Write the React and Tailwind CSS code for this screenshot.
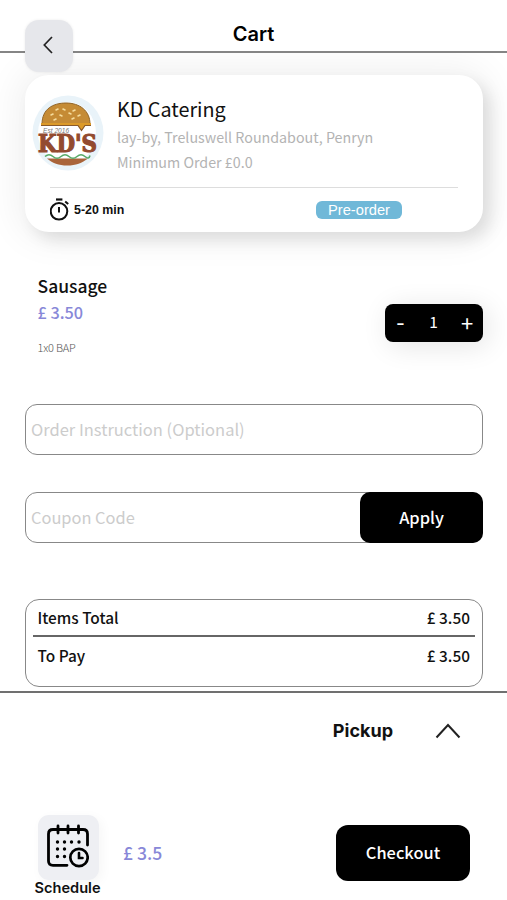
import React from "react";

const totals = [
  { label: "Items Total", value: "£ 3.50" },
  { label: "To Pay", value: "£ 3.50" },
];

function BurgerLogo() {
  return (
    <svg width="72" height="76" viewBox="0 0 72 76">
      <ellipse cx="36" cy="38" rx="35.5" ry="37.5" fill="#e9f3f9" />
      <ellipse cx="35" cy="38" rx="29" ry="31" fill="#fff" />
      <path
        d="M10 29 C10 14 21 8 34 8 C48 8 58 16 58 29 Z"
        fill="#c58b35"
        stroke="#8f6428"
        strokeWidth="1"
      />
      <path d="M9 28 H59 V31 H53 L49.5 36 L46 31 H9 Z" fill="#dc9a28" />
      <path d="M9 30.5 H46 L49.5 35.5 L53 30.5 H59" fill="none" stroke="#8a5a2b" strokeWidth="1.2" />
      <g stroke="#f5dc9c" strokeWidth="1.6" strokeLinecap="round">
        <path d="M24 15l2-1M31 14l2 1M41 16l2-1M19 20l2-1M28 20l2 1M37 18l2 1M46 21l2-1M22 25l2-1M40 24l2-1" />
      </g>
      <text
        x="11"
        y="37.5"
        fontSize="6.5"
        fontStyle="italic"
        fontFamily="Liberation Sans, sans-serif"
        fill="#777"
        textLength="26"
      >
        Est 2016
      </text>
      <path d="M15 63.500 H56 C50 68 44 70.500 35 70.500 C27 70.500 20 68 15 63.500 Z" fill="#a9643a" />
      <path
        d="M13 61.500 q4 -3.500 8 0 t8 0 t8 0 t8 0 t8 0 t5 -1"
        fill="none"
        stroke="#58aa68"
        strokeWidth="1.6"
      />
      <text
        x="6"
        y="57.3"
        fontSize="23.5"
        fontWeight="700"
        fontFamily="DejaVu Serif, serif"
        fill="#934b30"
        stroke="#934b30"
        strokeWidth="1.2"
        textLength="59"
        lengthAdjust="spacingAndGlyphs"
      >
        KD'S
      </text>
    </svg>
  );
}

function StopwatchIcon() {
  return (
    <svg width="21" height="24" viewBox="0 0 21 24" fill="none" stroke="#111">
      <circle cx="9" cy="13.300" r="8.300" strokeWidth="2" />
      <path d="M6 1.500H12.400" strokeWidth="2.2" />
      <path d="M9 9V14.500" strokeWidth="2" />
      <path d="M15.200 3.500L18.200 6.100" strokeWidth="2" />
    </svg>
  );
}

function ScheduleIcon() {
  return (
    <svg width="42" height="44" viewBox="0 0 42 44" fill="none" stroke="#000" strokeLinecap="round">
      <path
        d="M20 41.300H6Q1.500 41.300 1.500 37V10Q1.500 5.500 6 5.500H36Q40.500 5.500 40.500 10V21"
        strokeWidth="2.8"
      />
      <path d="M11 2V9M21 2V9M31.500 2V9" strokeWidth="2.800" />
      <path
        d="M10.500 18h.01M17.500 18h.01M24.500 18h.01M32 18h.01M10.500 25h.01M17.500 25h.01M10.500 32.500h.01M17.500 32.500h.01"
        strokeWidth="3.4"
      />
      <circle cx="32" cy="33.500" r="8.700" strokeWidth="2.700" />
      <path d="M32 29V34H35.500" strokeWidth="2.600" />
    </svg>
  );
}

function Header() {
  return (
    <header className="relative flex h-[53px] shrink-0 items-start justify-center border-b-2 border-[#858585] bg-white pt-[19px]">
      <button className="absolute top-5 left-[25px] z-10 flex h-[52px] w-12 items-center justify-center rounded-[14px] bg-[#e6e7eb] pr-[2px] pb-[3px] shadow-[0_0_3px_rgba(0,0,0,0.08)]">
        <svg width="10" height="18" viewBox="0 0 10 18" fill="none" stroke="#222" strokeWidth="1.7">
          <path d="M9 1L1.300 9L9 17" />
        </svg>
      </button>
      <h1 className="font-['Inter',sans-serif] text-[20px] leading-[30px] font-semibold text-black">
        Cart
      </h1>
    </header>
  );
}

function RestaurantCard() {
  return (
    <section className="h-[157px] rounded-[24px] bg-white shadow-[8px_8px_16px_rgba(0,0,0,0.10),0_0_36px_8px_rgba(0,0,0,0.06)]">
      <div className="flex h-[112px] pt-[20px] pl-[7px]">
        <BurgerLogo />
        <div className="-mt-px pl-[13px]">
          <h2 className="text-[19.8px] leading-[30px] text-[#111]">KD Catering</h2>
          <p className="text-[14.27px] leading-[25px] text-[#b3b3b3]">
            lay-by, Treluswell Roundabout, Penryn
          </p>
          <p className="text-[14.27px] leading-[25px] text-[#b3b3b3]">Minimum Order £0.0</p>
        </div>
      </div>
      <div className="mx-[25px] flex h-[45px] items-center border-t border-[#ddd]">
        <StopwatchIcon />
        <span className="ml-[3px] font-['Liberation_Sans',sans-serif] text-[12.4px] font-bold text-[#111]">
          5-20 min
        </span>
        <span className="mr-[56px] ml-auto flex h-[18px] w-[86px] items-center justify-center rounded-[6px] bg-[#70b8d8] font-['Liberation_Sans',sans-serif] text-[14.7px] text-white">
          Pre-order
        </span>
      </div>
    </section>
  );
}

function CartItem() {
  return (
    <section className="mt-[42px] flex h-[86px] justify-between pl-[12.5px]">
      <div>
        <h3 className="text-[17.5px] leading-[24px] font-medium text-[#111]">Sausage</h3>
        <p className="text-[16.3px] leading-[28px] font-medium text-[#8888d8]">£ 3.50</p>
        <p className="mt-[13px] text-[11px] leading-4 font-light tracking-[-0.2px] text-[#555]">1x0 BAP</p>
      </div>
      <div className="mt-[30px] flex h-[38px] w-[98px] items-center rounded-[8px] bg-black text-white shadow-[4px_4px_28px_rgba(0,0,0,0.11)]">
        <button className="w-[31px] pb-[4px] text-[24px] leading-[30px]">-</button>
        <span className="flex-1 pb-[3px] text-center text-[15.5px]">1</span>
        <button className="w-[32px] pb-[3px] text-[22px] leading-[30px]">+</button>
      </div>
    </section>
  );
}

function App() {
  return (
    <div className="flex h-[900px] w-[507px] flex-col overflow-hidden bg-white font-['Noto_Sans_CJK_SC',sans-serif]">
      <Header />

      <main className="flex h-[638px] shrink-0 flex-col overflow-hidden pt-[22px] pr-[24px] pl-[25px]">
        <RestaurantCard />
        <CartItem />

        <div className="mt-[44px] flex h-[51px] items-center rounded-[12px] border border-[#888] px-[5px] pb-px text-[16.5px] text-[#ccc]">
          Order Instruction (Optional)
        </div>

        <div className="mt-[37px] flex h-[51px] items-stretch rounded-[12px] border border-[#888]">
          <span className="flex flex-1 items-center px-[5px] pb-px text-[16.4px] text-[#ccc]">Coupon Code</span>
          <button className="-my-px -mr-px w-[123px] rounded-[10px] bg-black pb-px text-[16.4px] font-medium text-white">
            Apply
          </button>
        </div>

        <section className="mt-[56px] h-[88px] rounded-[14px] border border-[#888] px-[7px] text-[15.4px] font-medium text-[#111]">
          {totals.map((row) => (
            <div
              key={row.label}
              className="flex h-[37px] items-center justify-between pt-px pr-[5px] pl-[4.5px] first:border-b-2 first:border-[#666]"
            >
              <span>{row.label}</span>
              <span>{row.value}</span>
            </div>
          ))}
        </section>
      </main>

      <footer className="flex-1 border-t-2 border-[#707070] px-[34px]">
        <div className="flex h-[75px] items-center justify-end gap-[42px] pr-[12px]">
          <span className="font-['Inter',sans-serif] text-[18px] font-bold text-[#111]">Pickup</span>
          <svg width="26" height="16" viewBox="0 0 26 16" fill="none" stroke="#222" strokeWidth="2">
            <path d="M1.500 14.500L13 2L24.500 14.500" />
          </svg>
        </div>
        <div className="mt-[47px] flex items-start">
          <div className="flex w-[67px] flex-col items-center">
            <div className="ml-px flex h-[65px] w-[61px] items-center justify-center rounded-[11px] bg-[#eeeff3] pr-px pb-[3px] shadow-[3px_3px_12px_rgba(0,0,0,0.04)]">
              <ScheduleIcon />
            </div>
            <span className="font-['Inter',sans-serif] text-[14.6px] leading-4 font-semibold text-[#111]">
              Schedule
            </span>
          </div>
          <span className="mt-[25px] ml-[22px] text-[17.6px] leading-[26px] font-medium text-[#8888d8]">
            £ 3.5
          </span>
          <button className="mt-[10px] mr-[3px] ml-auto h-[56px] w-[134px] rounded-[12px] bg-black pb-px text-[16.4px] font-medium text-white">
            Checkout
          </button>
        </div>
      </footer>
    </div>
  );
}

export default App;
